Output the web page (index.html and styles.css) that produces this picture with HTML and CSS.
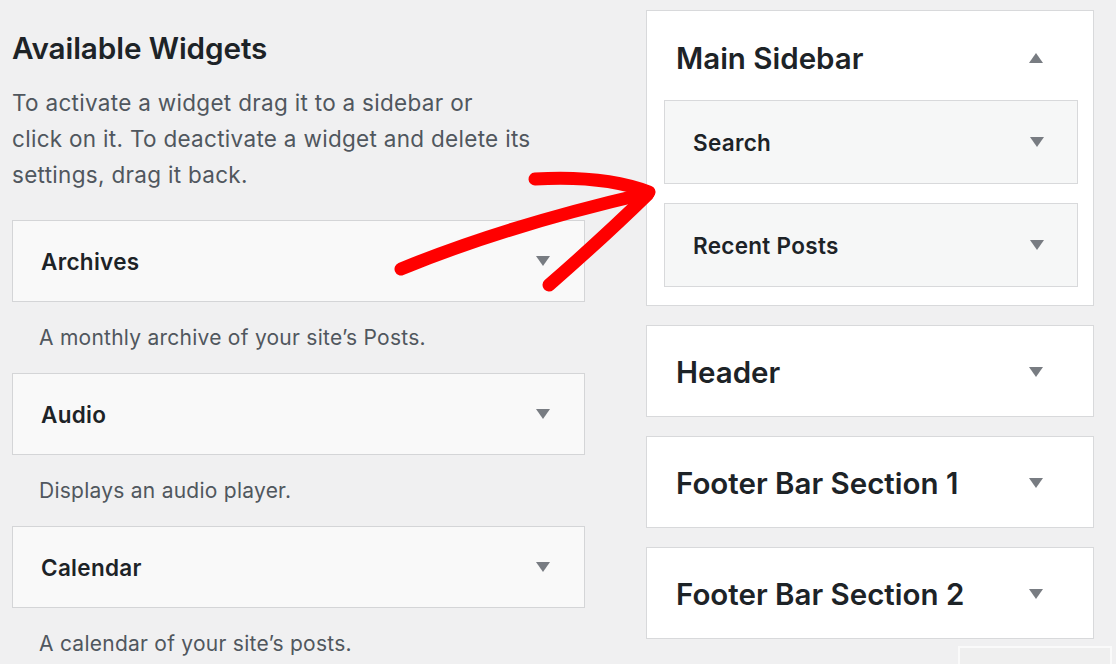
FILE: index.html
```html
<!DOCTYPE html>
<html lang="en">
<head>
<meta charset="utf-8">
<title>Widgets</title>
<link rel="stylesheet" href="styles.css">
</head>
<body>
<div class="page">
  <section class="available">
    <h2 class="available-title">Available Widgets</h2>
    <p class="available-desc">To activate a widget drag it to a sidebar or<br>click on it. To deactivate a widget and delete its settings, drag it back.</p>
    <div class="widget-list">
      <div class="widget-item">
        <div class="widget">
          <span class="widget-name">Archives</span>
          <span class="tri tri-down"></span>
        </div>
        <p class="widget-desc">A monthly archive of your site’s Posts.</p>
      </div>
      <div class="widget-item">
        <div class="widget">
          <span class="widget-name">Audio</span>
          <span class="tri tri-down"></span>
        </div>
        <p class="widget-desc">Displays an audio player.</p>
      </div>
      <div class="widget-item">
        <div class="widget">
          <span class="widget-name">Calendar</span>
          <span class="tri tri-down"></span>
        </div>
        <p class="widget-desc">A calendar of your site’s posts.</p>
      </div>
    </div>
  </section>

  <section class="sidebars">
    <div class="sidebar open">
      <div class="sidebar-head">
        <span class="sidebar-name">Main Sidebar</span>
        <span class="tri tri-up"></span>
      </div>
      <div class="sidebar-body">
        <div class="widget inner">
          <span class="widget-name">Search</span>
          <span class="tri tri-down"></span>
        </div>
        <div class="widget inner">
          <span class="widget-name">Recent Posts</span>
          <span class="tri tri-down"></span>
        </div>
      </div>
    </div>
    <div class="sidebar">
      <div class="sidebar-head">
        <span class="sidebar-name">Header</span>
        <span class="tri tri-down"></span>
      </div>
    </div>
    <div class="sidebar">
      <div class="sidebar-head">
        <span class="sidebar-name">Footer Bar Section 1</span>
        <span class="tri tri-down"></span>
      </div>
    </div>
    <div class="sidebar">
      <div class="sidebar-head">
        <span class="sidebar-name">Footer Bar Section 2</span>
        <span class="tri tri-down"></span>
      </div>
    </div>
    <div class="ghost"></div>
  </section>

  <svg class="annotation" width="1116" height="664" viewBox="0 0 1116 664" aria-hidden="true">
    <g fill="none" stroke="#ff0000" stroke-width="13" stroke-linecap="round" stroke-linejoin="round">
      <path d="M401 269 Q 505 226 648 193"/>
      <path d="M535 179 Q 604 175 649 192"/>
      <path d="M549 285 Q 603 238 648 194"/>
    </g>
  </svg>
</div>
</body>
</html>
```
FILE: styles.css
```css
* {
  box-sizing: border-box;
}

html, body {
  margin: 0;
  padding: 0;
}

body {
  background: #f0f0f1;
  font-family: Inter, "Noto Sans", "Liberation Sans", sans-serif;
  color: #1d2327;
  width: 1116px;
  height: 664px;
  overflow: hidden;
}

.page {
  position: relative;
  display: flex;
  align-items: flex-start;
  padding: 10px 0 0 12px;
  height: 664px;
}

/* ---------- Left column ---------- */
.available {
  width: 573px;
  flex: none;
}

.available-title {
  margin: 20px 0 0 0;
  font-size: 29.7px;
  line-height: 36px;
  font-weight: 600;
  letter-spacing: -0.1px;
}

.available-desc {
  margin: 19px 0 0 0;
  font-size: 22.5px;
  line-height: 36px;
  letter-spacing: 0.3px;
  color: #50575e;
  width: 545px;
}

.widget-list {
  margin-top: 27px;
  display: flex;
  flex-direction: column;
}

.widget-item {
  display: flex;
  flex-direction: column;
}

.widget {
  height: 82px;
  background: #f9f9f9;
  border: 1px solid #d4d5d7;
  display: flex;
  align-items: center;
  justify-content: space-between;
  padding: 0 34px 0 28px;
}

.widget-name {
  font-size: 22.5px;
  font-weight: 600;
  letter-spacing: 0.3px;
  color: #1d2327;
}

.widget-desc {
  margin: 0;
  height: 71px;
  padding: 24px 0 0 27px;
  font-size: 21px;
  line-height: 24px;
  letter-spacing: 0.25px;
  color: #50575e;
}

/* ---------- Triangles ---------- */
.tri {
  width: 0;
  height: 0;
  border-left: 7px solid transparent;
  border-right: 7px solid transparent;
  flex: none;
}

.tri-down {
  border-top: 10px solid #787c82;
}

.tri-up {
  border-bottom: 10px solid #787c82;
}

/* ---------- Right column ---------- */
.sidebars {
  margin-left: 61px;
  width: 448px;
  flex: none;
  display: flex;
  flex-direction: column;
  gap: 19px;
}

.sidebar {
  background: #ffffff;
  border: 1px solid #d8d9db;
}

.sidebar-head {
  height: 90px;
  display: flex;
  align-items: center;
  justify-content: space-between;
  padding: 1px 50px 0 29px;
}

.sidebar.open .sidebar-head {
  height: 89px;
  padding-top: 4px;
}

.sidebar-name {
  font-size: 29.5px;
  font-weight: 600;
  letter-spacing: 0;
  color: #1d2327;
}

.sidebar-body {
  display: flex;
  flex-direction: column;
  gap: 19px;
  padding: 0 15px 18px 17px;
}

.widget.inner {
  height: 84px;
  background: #f6f7f7;
  border: 1px solid #d8d9db;
  padding: 0 33px 0 28px;
}

.ghost {
  margin: -12px 0 0 312px;
  width: 154px;
  height: 40px;
  border: 2px solid #fafafa;
  border-bottom: none;
  background: #efefef;
}

/* ---------- Annotation ---------- */
.annotation {
  position: absolute;
  left: 0;
  top: 0;
  pointer-events: none;
}
```
